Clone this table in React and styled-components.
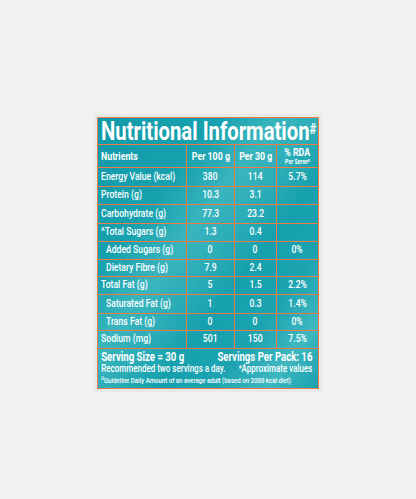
import React from 'react';
import styled, { createGlobalStyle } from 'styled-components';

const Global = createGlobalStyle`
  html, body { margin: 0; padding: 0; background: #f1f1f1; }
  body { font-family: Roboto, "Liberation Sans", sans-serif; }
`;

const ORANGE = '#ec7b45';

const Page = styled.div`
  width: 416px;
  height: 499px;
  box-sizing: border-box;
  padding-top: 114px;
  display: flex;
  justify-content: center;
  align-items: flex-start;
`;

const Pack = styled.div`
  padding: 3px;
  background: #e8e9e9;
`;

const Label = styled.div`
  width: 222px;
  box-sizing: border-box;
  border: 1px solid ${ORANGE};
  color: #fff;
  background: linear-gradient(128deg, #139aa8 0%, #17a1ae 28%, #3ab5be 42%, #2cadb8 52%, #16a0ad 62%, #1ba3b0 75%, #3fb7c0 88%, #19a1ae 100%);
  overflow: hidden;
`;

const Title = styled.div`
  height: 26px;
  border-bottom: 1px solid ${ORANGE};
  display: flex;
  align-items: center;
  padding-left: 3px;
  font-weight: 700;
  font-size: 26px;
  white-space: nowrap;
`;

const Cond = styled.span`
  display: inline-block;
  transform: scaleX(${p => p.$sx || 0.8});
  transform-origin: ${p => p.$origin || 'left'} center;
  white-space: nowrap;
`;

const Sup = styled.span`
  font-size: 15px;
  vertical-align: 6px;
`;

const Mark = styled.sup`
  font-size: ${p => p.$size || 5}px;
  line-height: 0;
  vertical-align: ${p => p.$up || 3}px;
`;

const Grid = styled.div`
  display: grid;
  grid-template-columns: 89px 48px 42px 41px;
`;

const Cell = styled.div`
  height: ${p => p.$h || 17}px;
  border-bottom: 1px solid ${ORANGE};
  border-right: ${p => (p.$last ? 'none' : `1px solid ${ORANGE}`)};
  display: flex;
  flex-direction: column;
  align-items: ${p => (p.$center ? 'center' : 'flex-start')};
  justify-content: center;
  padding-left: ${p => (p.$center ? 0 : p.$indent ? 8 : 3)}px;
  font-size: ${p => (p.$bold ? 11 : 10.8)}px;
  font-weight: ${p => (p.$bold ? 700 : 500)};
  line-height: 1;
`;

const SubHead = styled.span`
  font-size: 6.5px;
  font-weight: 700;
  margin-top: 1px;
`;

const Footer = styled.div`
  height: 39px;
  overflow: hidden;
`;

const FooterInner = styled.div`
  width: 272px;
  box-sizing: border-box;
  padding: 2px 4px 0 4px;
  display: flex;
  flex-direction: column;
  transform: scaleX(0.8);
  transform-origin: left top;
`;

const FootLine = styled.div`
  display: flex;
  justify-content: space-between;
  font-size: ${p => p.$size || 10}px;
  font-weight: ${p => (p.$bold ? 700 : 500)};
  line-height: ${p => p.$lh || 11}px;
  height: ${p => p.$lh || 11}px;
  white-space: nowrap;
`;

const rows = [
  ['Energy Value (kcal)', '380', '114', '5.7%', false, 18],
  ['Protein (g)', '10.3', '3.1', '', false, 17],
  ['Carbohydrate (g)', '77.3', '23.2', '', false, 18],
  ['^Total Sugars (g)', '1.3', '0.4', '', false, 17],
  ['Added Sugars (g)', '0', '0', '0%', true, 17],
  ['Dietary Fibre (g)', '7.9', '2.4', '', true, 16],
  ['Total Fat (g)', '5', '1.5', '2.2%', false, 17],
  ['Saturated Fat (g)', '1', '0.3', '1.4%', true, 18],
  ['Trans Fat (g)', '0', '0', '0%', true, 16],
  ['Sodium (mg)', '501', '150', '7.5%', false, 17],
];

export default function App() {
  return (
    <>
      <Global />
      <Page>
        <Pack>
          <Label>
            <Title>
              <Cond $sx={0.78}>Nutritional Information<Sup>#</Sup></Cond>
            </Title>
            <Grid>
              <Cell $h={22} $bold><Cond>Nutrients</Cond></Cell>
              <Cell $h={22} $bold $center><Cond $origin="center">Per 100 g</Cond></Cell>
              <Cell $h={22} $bold $center><Cond $origin="center">Per 30 g</Cond></Cell>
              <Cell $h={22} $bold $center $last>
                <Cond $origin="center">% RDA</Cond>
                <SubHead><Cond $origin="center">Per Serve<Mark $size={4} $up={2}>Ω</Mark></Cond></SubHead>
              </Cell>
              {rows.map(([name, a, b, c, indent, h]) => (
                <React.Fragment key={name}>
                  <Cell $h={h} $indent={indent}><Cond>{name}</Cond></Cell>
                  <Cell $h={h} $center><Cond $origin="center">{a}</Cond></Cell>
                  <Cell $h={h} $center><Cond $origin="center">{b}</Cond></Cell>
                  <Cell $h={h} $center $last><Cond $origin="center">{c}</Cond></Cell>
                </React.Fragment>
              ))}
            </Grid>
            <Footer>
              <FooterInner>
                <FootLine $bold $size={12} $lh={12}>
                  <span>Serving Size = 30 g</span>
                  <span>Servings Per Pack: 16</span>
                </FootLine>
                <FootLine $size={10} $lh={12}>
                  <span>Recommended two servings a day.</span>
                  <span><Mark $size={6}>#</Mark>Approximate values</span>
                </FootLine>
                <FootLine $size={7.6} $lh={11}>
                  <span><Mark $size={5}>Ω</Mark>Guideline Daily Amount of an average adult (based on 2000 kcal diet)</span>
                </FootLine>
              </FooterInner>
            </Footer>
          </Label>
        </Pack>
      </Page>
    </>
  );
}
